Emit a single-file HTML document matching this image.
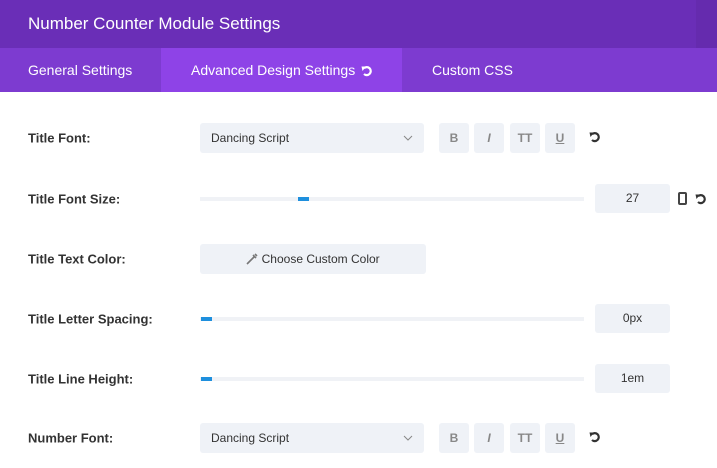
<!DOCTYPE html><html><head><style>
body{margin:0;width:717px;height:468px;overflow:hidden;background:#fff;font-family:"Liberation Sans",sans-serif;position:relative}
.a{position:absolute}
.hdr{left:0;top:0;width:696px;height:48px;background:#6a2eb7;color:#fff;font-size:17px;line-height:48px;padding-left:28px;box-sizing:border-box}
.hdr2{left:696px;top:0;width:21px;height:48px;background:#652bae}
.tabs{left:0;top:48px;width:717px;height:44px;background:#7d3bd0}
.tab{top:48px;height:44px;line-height:44px;color:#fff;font-size:14px}
.lbl{left:28px;font-size:13px;font-weight:bold;color:#333;transform:translateY(-50%)}
.dd{left:200px;width:224px;height:30px;background:#eff2f7;border-radius:3px;font-size:12px;color:#333;line-height:30px;padding-left:11px;box-sizing:border-box}
.btn{width:30px;height:30px;background:#eff2f7;border-radius:3px;color:#888;font-size:12px;font-weight:bold;text-align:center;line-height:30px}
.trk{left:200px;width:384px;height:4px;background:#f0f2f6}
.hd{width:11px;height:4px;background:#1e8fdd}
.inp{left:595px;width:75px;height:29px;background:#eff2f7;border-radius:3px;font-size:12px;color:#333;text-align:center;line-height:29px}
.chev{position:absolute;right:11px;top:11px}
</style></head><body>
<svg width="0" height="0" style="position:absolute"><defs><symbol id="r" viewBox="0 0 12 12"><path d="M3 3.2A4 4 0 1 1 3 9" fill="none" stroke="#333" stroke-width="2.2"/><path d="M0.5 1.5L5 1.5L1.5 6Z" fill="#333"/></symbol></defs></svg>
<div class="a hdr">Number Counter Module Settings</div><div class="a hdr2"></div>
<div class="a tabs"></div>
<div class="a" style="left:161px;top:48px;width:241px;height:44px;background:#8e43e7"></div>
<div class="a tab" style="left:28px">General Settings</div>
<div class="a tab" style="left:191px">Advanced Design Settings</div>
<svg class="a" style="left:361px;top:65px" width="12" height="12"><path d="M3 3.2A4 4 0 1 1 3 9" fill="none" stroke="#fff" stroke-width="2.2"/><path d="M0.5 1.5L5 1.5L1.5 6Z" fill="#fff"/></svg>
<div class="a tab" style="left:432px">Custom CSS</div>

<div class="a lbl" style="top:138px">Title Font:</div>
<div class="a dd" style="top:123px">Dancing Script<svg class="chev" width="10" height="8"><path d="M1 2L5 6L9 2" fill="none" stroke="#888" stroke-width="1"/></svg></div>
<div class="a btn" style="left:439px;top:123px">B</div>
<div class="a btn" style="left:474px;top:123px;font-style:italic">I</div>
<div class="a btn" style="left:510px;top:123px">TT</div>
<div class="a btn" style="left:545px;top:123px;text-decoration:underline">U</div>
<svg class="a" style="left:589px;top:131px" width="12" height="12"><use href="#r"/></svg>

<div class="a lbl" style="top:199px">Title Font Size:</div>
<div class="a trk" style="top:197px"></div><div class="a hd" style="left:298px;top:197px"></div>
<div class="a inp" style="top:184px">27</div>
<div class="a" style="left:678px;top:192px;width:5px;height:9px;border:2px solid #444;border-radius:2px"></div>
<svg class="a" style="left:695px;top:193px" width="12" height="12"><use href="#r"/></svg>

<div class="a lbl" style="top:259px">Title Text Color:</div>
<div class="a dd" style="top:244px;width:226px;text-align:center;padding:0"><svg width="12" height="12" style="vertical-align:-2px"><path d="M1 11L8 4M7 2L10 5M9 1L11 3" stroke="#777" stroke-width="1.6" fill="none"/></svg> Choose Custom Color</div>

<div class="a lbl" style="top:319px">Title Letter Spacing:</div>
<div class="a trk" style="top:317px"></div><div class="a hd" style="left:201px;top:317px"></div>
<div class="a inp" style="top:304px">0px</div>

<div class="a lbl" style="top:379px">Title Line Height:</div>
<div class="a trk" style="top:377px"></div><div class="a hd" style="left:201px;top:377px"></div>
<div class="a inp" style="top:364px">1em</div>

<div class="a lbl" style="top:438px">Number Font:</div>
<div class="a dd" style="top:423px">Dancing Script<svg class="chev" width="10" height="8"><path d="M1 2L5 6L9 2" fill="none" stroke="#888" stroke-width="1"/></svg></div>
<div class="a btn" style="left:439px;top:423px">B</div>
<div class="a btn" style="left:474px;top:423px;font-style:italic">I</div>
<div class="a btn" style="left:510px;top:423px">TT</div>
<div class="a btn" style="left:545px;top:423px;text-decoration:underline">U</div>
<svg class="a" style="left:589px;top:431px" width="12" height="12"><use href="#r"/></svg>
</body></html>
